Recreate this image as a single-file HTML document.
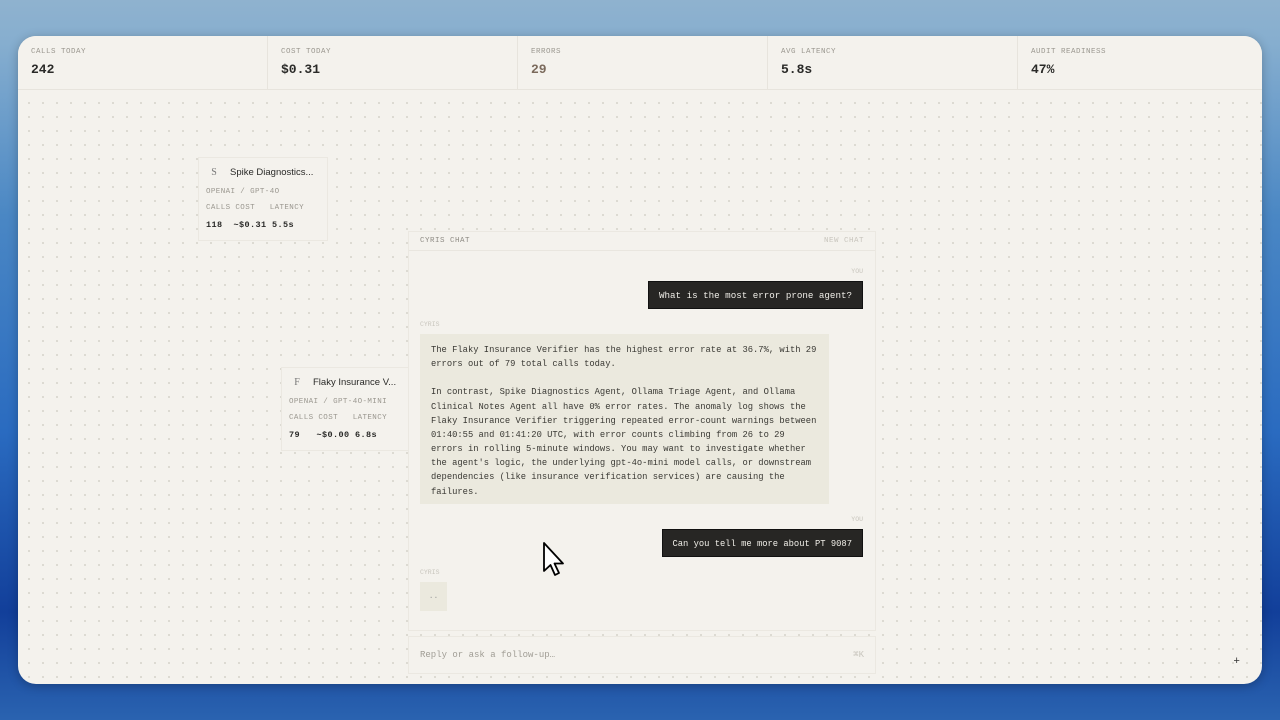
<!DOCTYPE html>
<html><head><meta charset="utf-8"><style>
*{margin:0;padding:0;box-sizing:border-box}
body{width:1280px;height:720px;overflow:hidden;position:relative;font-family:"Liberation Mono",monospace;
background:linear-gradient(180deg,#8fb2cf 0%,#86aecf 6%,#4a87c4 30%,#2a6bc0 60%,#123f9a 85%,#2a63b0 100%);}
.win{position:absolute;left:18px;top:36px;width:1244px;height:648px;border-radius:18px;background-color:#f4f2ed;
background-image:radial-gradient(circle,#d6d3cb 0.8px,transparent 1.1px);background-size:14px 14px;background-position:4px 4px;overflow:hidden;box-shadow:0 2px 10px rgba(0,0,0,.25)}
.stats{position:absolute;left:0;top:0;width:100%;height:54px;background:#f4f2ed;border-bottom:1px solid #e7e4dd;display:flex}
.st{width:250px;border-right:1px solid #e7e4dd;padding:12px 13px}
.st:last-child{border:none;flex:1}
.lb{font-size:7.5px;color:#9a978f;letter-spacing:.5px}
.vl{font-size:13px;color:#2a2a28;margin-top:6px;font-weight:bold}
.card{position:absolute;background:#f4f2ed;border:1px solid #ebe8e1;padding:6px 7px;font-size:7.5px;color:#9a978f;letter-spacing:.4px;white-space:nowrap}
.card .t{font-family:"Liberation Sans",sans-serif;font-size:9.5px;color:#2a2a28;letter-spacing:0;display:flex;align-items:center;gap:8px;margin-bottom:8px;height:16px}
.card .t i{font-style:normal;font-family:"Liberation Serif",serif;color:#777;font-size:10px;width:16px;text-align:center}
.card .n{color:#2a2a28;font-size:8.5px;margin-top:8px;font-weight:bold}
.chat{position:absolute;left:390px;top:195px;width:468px;height:400px;background:#f4f2ed;border:1px solid #ebe8e1}
.hd{height:19px;border-bottom:1px solid #e9e6df;font-size:7.5px;color:#8e8b84;padding:5px 11px;letter-spacing:.5px;display:flex;justify-content:space-between}
.sm{font-size:6.5px;color:#c8c5bd;position:absolute}
.ub{position:absolute;background:#272624;color:#f0eee8;font-size:8.8px;padding:0 10px;height:28px;line-height:28px;border:1px solid #111;white-space:nowrap}
.ab{position:absolute;left:11px;top:102px;width:409px;height:170px;background:#ebe9de;padding:9px 11px;font-size:8.8px;line-height:14.15px;color:#3a3934;white-space:pre}
.inp{position:absolute;left:390px;top:600px;width:468px;height:38px;border:1px solid #ebe8e1;background:#f4f2ed;font-size:9px;color:#a09d95;padding:13px 11px}
</style></head><body>
<div class="win">
<div class="stats">
<div class="st"><div class="lb">CALLS TODAY</div><div class="vl">242</div></div>
<div class="st"><div class="lb">COST TODAY</div><div class="vl">$0.31</div></div>
<div class="st"><div class="lb">ERRORS</div><div class="vl" style="color:#7b6a5c">29</div></div>
<div class="st"><div class="lb">AVG LATENCY</div><div class="vl">5.8s</div></div>
<div class="st"><div class="lb">AUDIT READINESS</div><div class="vl">47%</div></div>
</div>
<div class="card" style="left:180px;top:121px;width:130px;height:84px"><div class="t"><i>S</i>Spike Diagnostics...</div>OPENAI / GPT-4O<div style="margin-top:8px">CALLS COST &nbsp;&nbsp;LATENCY</div><div class="n">118 &nbsp;~$0.31 5.5s</div></div>
<div class="card" style="left:263px;top:331px;width:130px;height:84px"><div class="t"><i>F</i>Flaky Insurance V...</div>OPENAI / GPT-4O-MINI<div style="margin-top:8px">CALLS COST &nbsp;&nbsp;LATENCY</div><div class="n">79 &nbsp;&nbsp;~$0.00 6.8s</div></div>
<div class="chat">
<div class="hd"><span>CYRIS CHAT</span><span style="color:#c8c5bd">NEW CHAT</span></div>
<div class="sm" style="right:12px;top:36px">YOU</div>
<div class="ub" style="right:12px;top:49px;font-size:9.2px">What is the most error prone agent?</div>
<div class="sm" style="left:11px;top:89px">CYRIS</div>
<div class="ab">The Flaky Insurance Verifier has the highest error rate at 36.7%, with 29
errors out of 79 total calls today.

In contrast, Spike Diagnostics Agent, Ollama Triage Agent, and Ollama
Clinical Notes Agent all have 0% error rates. The anomaly log shows the
Flaky Insurance Verifier triggering repeated error-count warnings between
01:40:55 and 01:41:20 UTC, with error counts climbing from 26 to 29
errors in rolling 5-minute windows. You may want to investigate whether
the agent's logic, the underlying gpt-4o-mini model calls, or downstream
dependencies (like insurance verification services) are causing the
failures.</div>
<div class="sm" style="right:12px;top:284px">YOU</div>
<div class="ub" style="right:12px;top:297px;font-size:8.8px">Can you tell me more about PT 9087</div>
<div class="sm" style="left:11px;top:337px">CYRIS</div>
<div style="position:absolute;left:11px;top:350px;width:27px;height:29px;background:#ebe9de;font-size:8px;color:#999;text-align:center;line-height:29px">..</div>
</div>
<div class="inp">Reply or ask a follow-up…<span style="float:right;color:#c8c5bd">⌘K</span></div>
<div style="position:absolute;right:22px;top:620px;font-size:11px;color:#333">+</div>
<svg style="position:absolute;left:524px;top:505px" width="26" height="38" viewBox="0 0 26 38"><path d="M2 2 L2 30 L8.5 24 L13 34 L17 32 L12.5 22.5 L21 22.5 Z" fill="#fff" stroke="#000" stroke-width="1.8" stroke-linejoin="round"/></svg>
</div>
</body></html>
